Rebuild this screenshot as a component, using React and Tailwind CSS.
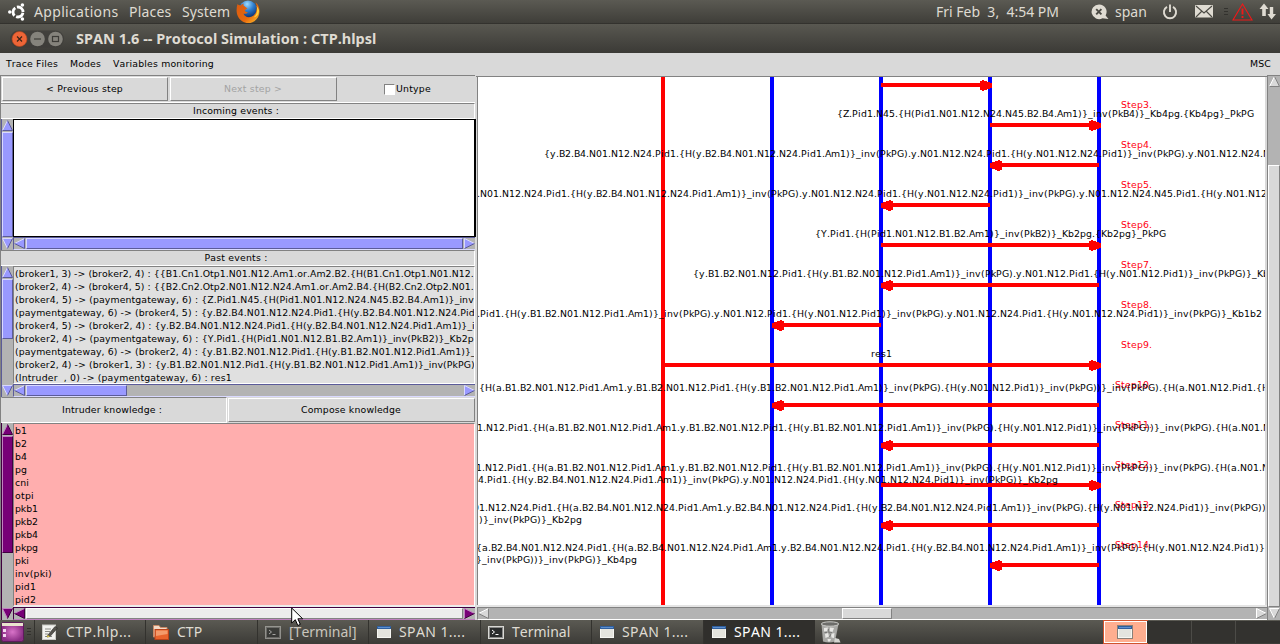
import React from "react";

const FLOWS = [
  { y: 85, from: 881, to: 990 },
  { y: 125, from: 990, to: 1099 },
  { y: 165, from: 1099, to: 990 },
  { y: 205, from: 990, to: 881 },
  { y: 245, from: 881, to: 1099 },
  { y: 285, from: 1099, to: 881 },
  { y: 325, from: 881, to: 772 },
  { y: 365, from: 663, to: 1099 },
  { y: 405, from: 1099, to: 772 },
  { y: 445, from: 1099, to: 881 },
  { y: 485, from: 881, to: 1099 },
  { y: 525, from: 1099, to: 881 },
  { y: 565, from: 1099, to: 990 },
];

const LABELS = [
  [837, 117, "{Z.Pid1.N45.{H(Pid1.N01.N12.N24.N45.B2.B4.Am1)}_inv(PkB4)}_Kb4pg.{Kb4pg}_PkPG"],
  [544, 157, "{y.B2.B4.N01.N12.N24.Pid1.{H(y.B2.B4.N01.N12.N24.Pid1.Am1)}_inv(PkPG).y.N01.N12.N24.Pid1.{H(y.N01.N12.N24.Pid1)}_inv(PkPG).y.N01.N12.N24.N45"],
  [477, 197, ".N01.N12.N24.Pid1.{H(y.B2.B4.N01.N12.N24.Pid1.Am1)}_inv(PkPG).y.N01.N12.N24.Pid1.{H(y.N01.N12.N24.Pid1)}_inv(PkPG).y.N01.N12.N24.N45.Pid1.{H(y.N01.N12"],
  [815, 237, "{Y.Pid1.{H(Pid1.N01.N12.B1.B2.Am1)}_inv(PkB2)}_Kb2pg.{Kb2pg}_PkPG"],
  [693, 277, "{y.B1.B2.N01.N12.Pid1.{H(y.B1.B2.N01.N12.Pid1.Am1)}_inv(PkPG).y.N01.N12.Pid1.{H(y.N01.N12.Pid1)}_inv(PkPG)}_Kb"],
  [477, 317, ".Pid1.{H(y.B1.B2.N01.N12.Pid1.Am1)}_inv(PkPG).y.N01.N12.Pid1.{H(y.N01.N12.Pid1)}_inv(PkPG).y.N01.N12.N24.Pid1.{H(y.N01.N12.N24.Pid1)}_inv(PkPG)}_Kb1b2"],
  [871, 357, "res1"],
  [479, 391, "{H(a.B1.B2.N01.N12.Pid1.Am1.y.B1.B2.N01.N12.Pid1.{H(y.B1.B2.N01.N12.Pid1.Am1)}_inv(PkPG).{H(y.N01.N12.Pid1)}_inv(PkPG))}_inv(PkPG).{H(a.N01.N12.Pid1.{H"],
  [477, 431, "1.N12.Pid1.{H(a.B1.B2.N01.N12.Pid1.Am1.y.B1.B2.N01.N12.Pid1.{H(y.B1.B2.N01.N12.Pid1.Am1)}_inv(PkPG).{H(y.N01.N12.Pid1)}_inv(PkPG))}_inv(PkPG).{H(a.N01.N"],
  [476, 471, "1.N12.Pid1.{H(a.B1.B2.N01.N12.Pid1.Am1.y.B1.B2.N01.N12.Pid1.{H(y.B1.B2.N01.N12.Pid1.Am1)}_inv(PkPG).{H(y.N01.N12.Pid1)}_inv(PkPG))}_inv(PkPG).{H(a.N01.N"],
  [478, 483, "4.Pid1.{H(y.B2.B4.N01.N12.N24.Pid1.Am1)}_inv(PkPG).y.N01.N12.N24.Pid1.{H(y.N01.N12.N24.Pid1)}_inv(PkPG)}_Kb2pg"],
  [473, 511, "01.N12.N24.Pid1.{H(a.B2.B4.N01.N12.N24.Pid1.Am1.y.B2.B4.N01.N12.N24.Pid1.{H(y.B2.B4.N01.N12.N24.Pid1.Am1)}_inv(PkPG).{H(y.N01.N12.N24.Pid1)}_inv(PkPG))"],
  [479, 523, ")}_inv(PkPG)}_Kb2pg"],
  [476, 551, "{a.B2.B4.N01.N12.N24.Pid1.{H(a.B2.B4.N01.N12.N24.Pid1.Am1.y.B2.B4.N01.N12.N24.Pid1.{H(y.B2.B4.N01.N12.N24.Pid1.Am1)}_inv(PkPG).{H(y.N01.N12.N24.Pid1)}"],
  [476, 563, "}_inv(PkPG))}_inv(PkPG)}_Kb4pg"],
];

const STEPS = [3, 4, 5, 6, 7, 8, 9, 10, 11, 12, 13, 14];

const PAST = [
  "(broker1, 3) -> (broker2, 4) : {{B1.Cn1.Otp1.N01.N12.Am1.or.Am2.B2.{H(B1.Cn1.Otp1.N01.N12.",
  "(broker2, 4) -> (broker4, 5) : {{B2.Cn2.Otp2.N01.N12.N24.Am1.or.Am2.B4.{H(B2.Cn2.Otp2.N01.",
  "(broker4, 5) -> (paymentgateway, 6) : {Z.Pid1.N45.{H(Pid1.N01.N12.N24.N45.B2.B4.Am1)}_inv",
  "(paymentgateway, 6) -> (broker4, 5) : {y.B2.B4.N01.N12.N24.Pid1.{H(y.B2.B4.N01.N12.N24.Pid",
  "(broker4, 5) -> (broker2, 4) : {y.B2.B4.N01.N12.N24.Pid1.{H(y.B2.B4.N01.N12.N24.Pid1.Am1)}_i",
  "(broker2, 4) -> (paymentgateway, 6) : {Y.Pid1.{H(Pid1.N01.N12.B1.B2.Am1)}_inv(PkB2)}_Kb2p",
  "(paymentgateway, 6) -> (broker2, 4) : {y.B1.B2.N01.N12.Pid1.{H(y.B1.B2.N01.N12.Pid1.Am1)}_",
  "(broker2, 4) -> (broker1, 3) : {y.B1.B2.N01.N12.Pid1.{H(y.B1.B2.N01.N12.Pid1.Am1)}_inv(PkPG)",
  "(Intruder  , 0) -> (paymentgateway, 6) : res1",
];

const KNOWLEDGE = ["b1", "b2", "b4", "pg", "cni", "otpi", "pkb1", "pkb2", "pkb4", "pkpg", "pki", "inv(pki)", "pid1", "pid2"];

// Advance widths of DejaVu Sans in thousandths of an em; digits and braces are 636.
const ADVANCE = {
  " ": 318, "(": 390, ")": 390, ",": 318, "-": 361, ".": 318, ":": 337, "<": 838, ">": 838, _: 500,
  A: 684, B: 686, C: 698, F: 575, G: 775, H: 752, I: 295, K: 656, M: 863, N: 748, O: 787, P: 603,
  S: 635, T: 611, U: 732, V: 684, Y: 611, Z: 685,
  a: 613, b: 635, c: 550, d: 635, e: 615, f: 352, g: 635, h: 634, i: 278, k: 579, l: 278, m: 974,
  n: 634, o: 612, p: 635, r: 411, s: 521, t: 392, u: 634, v: 592, w: 818, x: 592, y: 592,
};
const SIZE = 28 / 3;
const natural = (c) => ((ADVANCE[c] || 636) * SIZE) / 1000;

// Whole-pixel pen positions, as the toolkit's text renderer spaces its glyphs.
function penPositions(text, x) {
  const out = [];
  for (const c of text) {
    out.push(x);
    x += Math.round(natural(c));
  }
  return out.join(" ");
}

function Label({ children }) {
  let extra = 0;
  for (const c of children) extra += Math.round(natural(c)) - natural(c);
  return (
    <span className="whitespace-pre" style={{ letterSpacing: extra / children.length + "px" }}>
      {children}
    </span>
  );
}

const TONES = {
  blue: { fill: "#9999ff", light: "#d9d9ff", dark: "#5b5b99" },
  purple: { fill: "#770077", light: "#c080c0", dark: "#40003f" },
  gray: { fill: "#d9d9d9", light: "#ffffff", dark: "#828282" },
};

function Arrow({ dir, tone }) {
  const t = TONES[tone];
  const shapes = {
    up: ["5.5,0.5 10.5,10.5 0.5,10.5", "M0.5 10.5L5.5 0.5", "M5.5 0.5L10.5 10.5H0.5"],
    down: ["0.5,0.5 10.5,0.5 5.5,10.5", "M5.5 10.5L0.5 0.5H10.5", "M10.5 0.5L5.5 10.5"],
    left: ["0.5,5.5 10.5,0.5 10.5,10.5", "M0.5 5.5L10.5 0.5", "M10.5 0.5V10.5L0.5 5.5"],
    right: ["10.5,5.5 0.5,0.5 0.5,10.5", "M0.5 10.5V0.5L10.5 5.5", "M10.5 5.5L0.5 10.5"],
  };
  const [points, light, dark] = shapes[dir];
  return (
    <svg className="block h-[11px] w-[11px] shrink-0" viewBox="0 0 11 11">
      <polygon points={points} fill={t.fill} />
      <path d={light} fill="none" stroke={t.light} />
      <path d={dark} fill="none" stroke={t.dark} />
    </svg>
  );
}

function ListArea({ tone, vClass, vThumb, hThumb, hRow, vEdge, children }) {
  return (
    <div className={"flex " + vClass}>
      <div className={"flex w-3 shrink-0 flex-col items-start gap-px border-l bg-[#b3b3b3] py-px " + vEdge}>
        <Arrow dir="up" tone={tone} />
        <div className="flex w-full grow flex-col">
          <div className={vThumb} />
        </div>
        <Arrow dir="down" tone={tone} />
      </div>
      <div className="flex min-w-0 grow flex-col">
        {children}
        <div className={"flex h-[13px] shrink-0 items-center gap-px border-t border-b border-l bg-[#b3b3b3] " + hRow}>
          <Arrow dir="left" tone={tone} />
          <div className="flex h-full grow">
            <div className={hThumb} />
          </div>
          <Arrow dir="right" tone={tone} />
        </div>
      </div>
    </div>
  );
}

function Head({ to, from, y }) {
  const d = to > from ? 1 : -1;
  const tip = to + (d > 0 ? 2 : -0.5);
  const pts = [
    [tip, y - 2], [tip - d * 4, y - 3], [tip - d * 8, y - 4.5], [tip - d * 9, y - 5], [tip - d * 12, y - 4],
    [tip - d * 12, y + 5], [tip - d * 9, y + 6], [tip - d * 8, y + 5.5], [tip - d * 4, y + 4], [tip, y + 3],
  ];
  return <polygon points={pts.map((p) => p.join(",")).join(" ")} fill="#ff0000" shapeRendering="crispEdges" />;
}

function Chart() {
  return (
    <svg className="block h-[528px] w-[787px]" viewBox="478 77 787 528">
      <g shapeRendering="crispEdges">
        <rect x="661" y="77" width="4" height="528" fill="#ff0000" />
        {[770, 879, 988, 1097].map((x) => (
          <rect key={x} x={x} y="77" width="4" height="528" fill="#0000ff" />
        ))}
        {FLOWS.map((f) => (
          <rect key={f.y} x={Math.min(f.from, f.to)} y={f.y - 2} width={Math.abs(f.to - f.from)} height="4" fill="#ff0000" />
        ))}
      </g>
      {FLOWS.map((f) => (
        <Head key={f.y} {...f} />
      ))}
      <g fontFamily="DejaVu Sans" fontSize={SIZE}>
        {STEPS.map((n, i) => (
          <text key={n} x={penPositions("Step" + n + ".", n < 10 ? 1121 : 1115)} y={108 + 40 * i} fill="#ff0010">{"Step" + n + "."}</text>
        ))}
        {LABELS.map(([x, y, t]) => (
          <text key={y} x={penPositions(t, x)} y={y} fill="#000">{t}</text>
        ))}
      </g>
    </svg>
  );
}

function WindowIcon() {
  return (
    <svg className="h-3 w-[14px] shrink-0" viewBox="0 0 14 12">
      <rect x="0.5" y="0.5" width="13" height="11" fill="#e4e4de" stroke="#f6f6f2" />
      <path d="M0 0H14V3H0Z" fill="#2f5f9e" />
      <path d="M1 1H13V2H1Z" fill="#5d8fce" />
    </svg>
  );
}

function TerminalIcon({ dim }) {
  return (
    <svg className={dim ? "h-[13px] w-4 shrink-0 opacity-50" : "h-[13px] w-4 shrink-0"} viewBox="0 0 16 13">
      <rect x="0.5" y="0.5" width="15" height="12" fill="#2a2c2c" stroke="#d8d8d4" />
      <rect x="1.5" y="1.5" width="13" height="10" fill="none" stroke="#8a8a88" />
      <path d="M4 4L6.5 6L4 8M7.5 8.5H10.5" fill="none" stroke="#fff" />
    </svg>
  );
}

function Task({ icon, label, className }) {
  return (
    <div className={"flex h-full shrink-0 items-center border-l border-[#33322e] " + className}>
      {icon}
      <span className="ml-2 whitespace-pre font-['Noto_Sans',sans-serif] text-[14px]">{label}</span>
    </div>
  );
}

function TopPanel() {
  return (
    <div className="flex h-6 shrink-0 items-center border-b border-[#33322e] bg-linear-to-b from-[#5b5a53] to-[#3f3e39] font-['Noto_Sans',sans-serif] text-[14px] text-[#dfdbd2]">
      <svg className="ml-[8px] h-[18px] w-[18px]" viewBox="0 0 18 18">
        <circle cx="10" cy="9" r="5" fill="none" stroke="#fff" strokeWidth="2.8" strokeDasharray="8.7 1.77" strokeDashoffset="-0.9" />
        <circle cx="1.8" cy="9" r="1.8" fill="#fff" />
        <circle cx="14.4" cy="2" r="1.8" fill="#fff" />
        <circle cx="14.4" cy="16" r="1.8" fill="#fff" />
      </svg>
      <span className="ml-2 w-[95px] tracking-[0.33px]">Applications</span>
      <span className="w-[53px] tracking-[0.2px]">Places</span>
      <span className="w-[54px] tracking-[0.1px]">System</span>
      <svg className="h-6 w-6" viewBox="0 0 24 24">
        <defs>
          <radialGradient id="globe" cx="0.45" cy="0.2" r="0.8">
            <stop offset="0" stopColor="#9fdcff" />
            <stop offset="0.45" stopColor="#2f7fd0" />
            <stop offset="1" stopColor="#0a2866" />
          </radialGradient>
          <linearGradient id="fox" x1="0" y1="0" x2="1" y2="1">
            <stop offset="0" stopColor="#d85a12" />
            <stop offset="0.6" stopColor="#e8680c" />
            <stop offset="1" stopColor="#ffc52e" />
          </linearGradient>
        </defs>
        <circle cx="12" cy="9.5" r="9" fill="url(#globe)" />
        <path d="M1.5 4C.2 8 .2 13 2 16.500C4 20.500 8 23 12 23C19 23 23.500 17.500 23.500 11.500C23.500 7 22 4.500 19.500 2.500C20.800 5 21.200 7 20.500 9.500C20.300 14 17 17.200 13 17.200C10 17.200 8 15.500 7.500 13.500C9 14 10.500 13.700 12 12.500C11 12 9.500 12 8.800 10.500C9.500 9.500 10.500 9 11.500 8.300C10 7.800 9 6.500 7.500 5.500L7.500 3.500C6 4 5.200 4.800 4.500 5.500C3.500 5.300 2.500 5 1.500 4Z" fill="url(#fox)" />
        <path d="M20.500 6C22 10 21 15 17.500 17.500C21 17 23 14 23 10.500C22.500 8.500 21.500 7 20.500 6Z" fill="#ffd23a" />
      </svg>
      <span className="ml-auto whitespace-pre">Fri Feb  3,  4:54 PM</span>
      <div className="ml-8 flex w-[189px] shrink-0 items-center">
        <svg className="h-[16px] w-[18px]" viewBox="0 0 18 16">
          <path d="M8 0.500A7.500 7.300 0 1 0 11.500 14.300L17.500 15L14.600 11.400A7.400 7.300 0 0 0 8 0.500Z" fill="#dfdbd2" />
          <path d="M5.200 5.200L10.400 10.400M10.400 5.200L5.200 10.400" stroke="#4a4943" strokeWidth="1.900" />
        </svg>
        <span className="ml-[6px] w-[47px]">span</span>
        <svg className="h-4 w-4" viewBox="0 0 16 16" fill="none" stroke="#dfdbd2" strokeWidth="1.900">
          <path d="M5 2.800A6.100 6.100 0 1 0 11 2.800M8 0.500V8" />
        </svg>
        <svg className="ml-[17px] h-[13px] w-[18px]" viewBox="0 0 18 13">
          <rect width="18" height="12.500" rx="1" fill="#dfdbd2" />
          <path d="M1 1L9 8L17 1M1 12L6.500 6.500M17 12L11.500 6.500" fill="none" stroke="#4a4943" strokeWidth="1.100" />
        </svg>
        <svg className="ml-[11px] h-2 w-[5px]" viewBox="0 0 5 8"><path d="M0 .5H4M0 3.500H4M0 6.500H4" stroke="#33322e" /></svg>
        <svg className="ml-[3px] h-[18px] w-[21px]" viewBox="0 0 21 18">
          <path d="M10.500 1L20 17H1Z" fill="none" stroke="#f01818" strokeWidth="1.100" />
          <path d="M10.500 5.500V11.500M10.500 13V15" stroke="#f01818" strokeWidth="1.900" />
        </svg>
        <svg className="ml-[6px] h-[17px] w-[18px]" viewBox="0 0 18 17" fill="#dfdbd2">
          <path d="M5 0.500L9.500 6H6.800V13H3.200V6H0.500ZM12.500 16.500L8.500 11H10.800V4H14.200V11H17Z" />
        </svg>
      </div>
    </div>
  );
}

function TitleBar() {
  return (
    <div className="flex h-[29px] shrink-0 items-center bg-linear-to-b from-[#595851] to-[#3b3a36]">
      <svg className="ml-[10px] h-[18px] w-[54px]" viewBox="0 0 54 18">
        <rect x="0" y="0.500" width="54" height="17" rx="8.500" fill="#3c3b37" opacity="0.700" />
        <circle cx="9.500" cy="9" r="7.500" fill="#ee6537" stroke="#b5441c" strokeWidth="0.600" />
        <path d="M7 6.500L12 11.500M12 6.500L7 11.500" stroke="#3c2418" strokeWidth="1.200" />
        <circle cx="27.500" cy="9" r="7.300" fill="#85837c" />
        <path d="M24 9H31" stroke="#3c3b37" strokeWidth="1.200" />
        <circle cx="45.500" cy="9" r="7.300" fill="#85837c" />
        <rect x="42.500" y="6.500" width="6" height="5" fill="none" stroke="#3c3b37" strokeWidth="1.200" />
      </svg>
      <span className="ml-3 pb-[2px] font-['Noto_Sans',sans-serif] text-[14.5px] font-bold tracking-[0.02px] text-[#dfdbd2]">SPAN 1.6 -- Protocol Simulation : CTP.hlpsl</span>
    </div>
  );
}

function LeftPane() {
  return (
    <div className="flex w-[476px] shrink-0 flex-col border-l border-[#828282] pr-px">
      <div className="flex h-[28px] items-center border-t border-b border-t-[#828282] border-b-white pl-px">
        <button className="h-6 w-[166px] border border-white border-r-[#828282] border-b-[#828282] pr-px"><Label>{"< Previous step"}</Label></button>
        <button className="ml-[2px] h-6 w-[167px] border border-white border-r-[#828282] border-b-[#828282] pr-px text-[#a3a3a3]"><Label>{"Next step >"}</Label></button>
        <label className="ml-[47px] flex items-center">
          <span className="mr-px h-[11px] w-[11px] border border-white border-t-[#828282] border-l-[#828282] bg-white" />
          <Label>Untype</Label>
        </label>
      </div>
      <div className="flex h-4 items-center justify-center border-t border-r border-b border-t-[#828282] border-r-white border-b-white pr-[3px]"><Label>Incoming events :</Label></div>
      <ListArea
        tone="blue"
        vClass="h-[131px]"
        vEdge="border-[#5b5b99]"
        hRow="border-[#5b5b99] border-b-[#d9d9ff]"
        vThumb="w-full grow border border-[#d9d9ff] border-r-[#5b5b99] border-b-[#5b5b99] bg-[#9999ff]"
        hThumb="h-full grow border border-[#d9d9ff] border-r-[#5b5b99] border-b-[#5b5b99] bg-[#9999ff]"
      >
        <div className="mr-[-1px] grow border border-r-2 border-black bg-white" />
      </ListArea>
      <div className="flex h-4 items-center justify-center border-t border-r border-b border-t-[#828282] border-r-white border-b-white pr-[3px]"><Label>Past events :</Label></div>
      <ListArea
        tone="blue"
        vClass="h-[131px]"
        vEdge="border-[#5b5b99]"
        hRow="border-[#5b5b99] border-b-[#d9d9ff]"
        vThumb="h-[60px] w-full border border-[#d9d9ff] border-r-[#5b5b99] border-b-[#5b5b99] bg-[#9999ff]"
        hThumb="h-full w-[101px] border border-[#d9d9ff] border-r-[#5b5b99] border-b-[#5b5b99] bg-[#9999ff]"
      >
        <div className="h-[118px] overflow-hidden border border-white border-t-[#828282] border-l-[#828282] bg-[#e0e0e0] pl-px whitespace-pre">
          {PAST.map((line) => (
            <div key={line} className="h-[13px] leading-[13px]"><Label>{line}</Label></div>
          ))}
        </div>
      </ListArea>
      <div className="flex h-[26px]">
        <div className="flex w-[226px] items-center justify-center border border-t-[#828282] border-r-white border-b-white border-l-transparent pr-1"><Label>Intruder knowledge :</Label></div>
        <button className="my-px ml-px grow border border-white border-r-[#828282] border-b-[#828282] pr-px"><Label>Compose knowledge</Label></button>
      </div>
      <ListArea
        tone="purple"
        vClass="h-[197px]"
        vEdge="border-[#40003f]"
        hRow="border-[#40003f] border-b-[#c080c0]"
        vThumb="h-[117px] w-full border border-[#c080c0] border-r-[#40003f] border-b-[#40003f] bg-[#770077]"
        hThumb="h-full grow border border-white border-r-[#828282] border-b-[#828282] bg-[#ececec]"
      >
        <div className="h-[184px] overflow-hidden border border-b-2 border-white border-t-[#828282] border-b-[#ececec] border-l-[#828282] bg-[#ffaeae] pl-px">
          {KNOWLEDGE.map((line) => (
            <div key={line} className="h-[13px] leading-[13px]"><Label>{line}</Label></div>
          ))}
        </div>
      </ListArea>
    </div>
  );
}

function RightPane() {
  return (
    <div className="flex min-w-0 grow pt-px">
      <div className="flex w-[791px] shrink-0 flex-col">
        <div className="flex h-[531px] border-t border-b-2 border-t-[#828282] border-b-[#e4e4e4] bg-white">
          <div className="w-px bg-[#d9d9d9]" />
          <div className="w-px bg-[#828282]" />
          <Chart />
          <div className="w-[2px] bg-[#d9d9d9]" />
        </div>
        <div className="ml-px flex h-[13px] items-center border-t border-b border-l border-[#828282] border-b-white bg-[#b3b3b3]">
          <Arrow dir="left" tone="gray" />
          <div className="mr-auto ml-[353px] h-[11px] w-[50px] border border-white border-r-[#828282] border-b-[#828282] bg-[#d9d9d9]" />
          <Arrow dir="right" tone="gray" />
        </div>
      </div>
      <div className="-mt-px flex grow flex-col items-center border-t border-l border-[#828282] bg-[#b3b3b3] pb-px">
        <Arrow dir="up" tone="gray" />
        <div className="mt-[78px] mb-px w-full grow border border-white border-r-[#828282] border-b-[#828282] bg-[#d9d9d9]" />
        <Arrow dir="down" tone="gray" />
      </div>
    </div>
  );
}

function TaskBar() {
  return (
    <div className="flex h-6 shrink-0 items-center bg-linear-to-b from-[#5b5a53] to-[#3c3b37] text-[#dfdbd2]">
      <svg className="ml-px h-[22px] w-[23px] shrink-0" viewBox="0 0 23 22">
        <defs>
          <radialGradient id="desk"><stop offset="0" stopColor="#d873c8" /><stop offset="1" stopColor="#8c2f86" /></radialGradient>
        </defs>
        <rect x="0.500" y="1.500" width="22" height="19" rx="2" fill="url(#desk)" stroke="#5d1d5c" />
        <rect x="1" y="2" width="21" height="3" fill="#e9e4cf" />
        <path d="M2 8H5V11H2ZM2 13H5V16H2Z" fill="#f4d9ef" />
      </svg>
      <svg className="ml-[3px] h-2 w-1 shrink-0" viewBox="0 0 4 8"><path d="M0 .5H4M0 3.500H4M0 6.500H4" stroke="#33322e" /></svg>
      <Task className="ml-[3px] w-[111px] pl-[7px] tracking-[0.45px]" label="CTP.hlp..." icon={
        <svg className="h-4 w-4 shrink-0" viewBox="0 0 16 16">
          <rect x="0.500" y="1" width="13" height="14.500" fill="#f2f2ef" stroke="#c8c8c4" />
          <path d="M3 5H9M3 7.500H8M3 10H6M3 12.500H10" stroke="#8a8a86" />
          <path d="M5.500 11.500L13 2.500L15.500 4L8 12.500L5 13Z" fill="#55534e" stroke="#2c2b28" strokeWidth="0.600" />
          <path d="M5.500 11L8 12.500L5 13.500Z" fill="#e3cf4c" />
        </svg>
      } />
      <Task className="w-[112px] pl-[7px]" label="CTP" icon={
        <svg className="h-[15px] w-4 shrink-0" viewBox="0 0 16 15">
          <path d="M0.500 12V0.500H6L7.500 2.500H14V12Z" fill="#f3d9c6" stroke="#c98a66" />
          <rect x="2" y="4.500" width="13.500" height="10" fill="#e9632c" stroke="#b8421a" />
          <path d="M3 5.500H14.500V9L3 11Z" fill="#f49a6b" />
        </svg>
      } />
      <Task className="w-[111px] pl-[7px] text-[#c9c5bc]" label="[Terminal]" icon={<TerminalIcon dim />} />
      <Task className="w-[112px] pl-2 tracking-[0.4px]" label="SPAN 1...." icon={<WindowIcon />} />
      <Task className="w-[111px] pl-[7px]" label="Terminal" icon={<TerminalIcon />} />
      <Task className="w-[112px] pl-2 tracking-[0.4px]" label="SPAN 1...." icon={<WindowIcon />} />
      <Task className="w-[112px] bg-[#302f2c] pl-2 tracking-[0.4px] text-white" label="SPAN 1...." icon={<WindowIcon />} />
      <svg className="ml-[5px] h-[22px] w-[21px]" viewBox="0 0 21 22">
        <path d="M1.500 3L3 20.500Q9 22.500 15 20.500L18.500 3Z" fill="#a9a9a6" />
        <path d="M4 7L8 6.500L7 10L4 10.500ZM10 6.500L14 7L12.500 11L9.500 10ZM5 13L8 12L9 15.500L5.500 17ZM11 13L14.500 12L14 17L11.500 16.500ZM7.500 18L11 18L10 20.500H8Z" fill="#e8e8e5" />
        <path d="M8.500 8L9 12L12 11.500M4.500 11.500L7 11.500M9.500 16L11 13" stroke="#737370" strokeWidth="0.900" fill="none" />
        <ellipse cx="10" cy="3" rx="8.700" ry="2.200" fill="#6d6d6a" stroke="#c8c8c4" />
        <path d="M15 17L19 18L20.500 21.500H14Z" fill="#d4d4d0" />
      </svg>
      <div className="ml-auto flex h-full w-[176px] py-px">
        <div className="flex w-[43px] items-center justify-center border border-white bg-[#ffae90] pr-[2px] outline-1 outline-[#d0532d]">
          <span className="flex outline-[0.5px] outline-[#8a8078]"><WindowIcon /></span>
        </div>
        <div className="w-[45px] border-r border-[#4c4b47] bg-[#33322f]" />
        <div className="w-[44px] border-r border-[#4c4b47] bg-[#33322f]" />
        <div className="grow bg-[#33322f]" />
      </div>
    </div>
  );
}

export default function App() {
  return (
    <div className="relative flex h-[644px] w-[1280px] flex-col overflow-hidden bg-[#d9d9d9] font-['DejaVu_Sans',sans-serif] text-[9.333px] leading-3 text-black [font-kerning:none]">
      <TopPanel />
      <TitleBar />
      <div className="flex h-[22px] shrink-0 items-center pr-[9px] pl-[6px]">
        <span className="w-16"><Label>Trace Files</Label></span>
        <span className="w-[43px]"><Label>Modes</Label></span>
        <Label>Variables monitoring</Label>
        <span className="ml-auto"><Label>MSC</Label></span>
      </div>
      <div className="flex h-[545px] shrink-0">
        <LeftPane />
        <RightPane />
      </div>
      <TaskBar />
      <svg className="absolute top-[607px] left-[291px] h-5 w-[13px]" viewBox="0 0 13 20">
        <path d="M0.700 1V16L4.300 12.700L6.800 18.500L9.300 17.400L6.900 11.800H11.700Z" fill="#fff" stroke="#000" />
      </svg>
    </div>
  );
}
